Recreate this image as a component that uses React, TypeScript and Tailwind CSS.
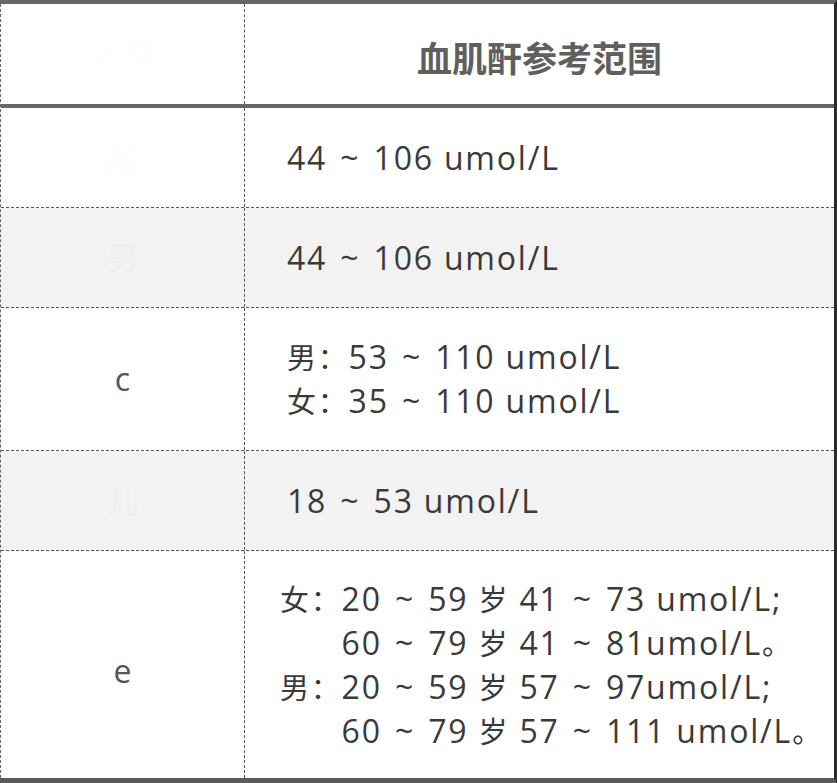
const Tl = () => <span className="mx-[3px]">~</span>;

export default function App() {
  const cjk = "text-[29px]";
  return (
    <div className="w-[837px] h-[783px] bg-white font-['Open_Sans','Noto_Sans_CJK_SC',sans-serif] text-[#3a3a3a]">
      <div className="w-[837px] h-[783px] border-t-4 border-t-[#666666] border-b-[5px] border-b-[#5a5a5a] border-r-[3px] border-r-[#2a2a2a]">
        <div className="h-full border-l border-dashed border-l-[#666666] flex flex-col">
          {/* header */}
          <div className="flex h-[104px] border-b-4 border-b-[#666666]">
            <div className="w-[244px] border-r border-dashed border-[#555555] flex items-center justify-center text-[#fefefe] text-[32px]">
              人群
            </div>
            <div className="flex-1 flex items-center justify-center font-['Noto_Sans_CJK_SC',sans-serif] font-bold text-[35px] text-[#5f5f5f] pt-[6px]">
              血肌酐参考范围
            </div>
          </div>

          {/* row 1 */}
          <div className="flex h-[100px] border-b border-dashed border-[#555555]">
            <div className="w-[244px] border-r border-dashed border-[#555555] flex items-center justify-center text-[32px] text-[#fdfdfd]">
              成
            </div>
            <div className="flex-1 flex items-center pl-[42px] text-[32px] tracking-[1.8px]">
              <span>44 <Tl /> 106 umol/L</span>
            </div>
          </div>

          {/* row 2 */}
          <div className="flex h-[100px] border-b border-dashed border-[#555555] bg-[#f2f2f2]">
            <div className="w-[244px] border-r border-dashed border-[#555555] flex items-center justify-center text-[32px] text-[#efefef]">
              男
            </div>
            <div className="flex-1 flex items-center pl-[42px] text-[32px] tracking-[1.8px]">
              <span>44 <Tl /> 106 umol/L</span>
            </div>
          </div>

          {/* row 3 */}
          <div className="flex h-[143px] border-b border-dashed border-[#555555]">
            <div className="w-[244px] border-r border-dashed border-[#555555] flex items-center justify-center text-[32px] text-[#555555]">
              c
            </div>
            <div className="flex-1 flex flex-col justify-center pl-[42px] text-[32px] leading-[43px] tracking-[1.8px]">
              <div>
                <span className={cjk}>男：</span>53 <Tl /> 110 umol/L
              </div>
              <div>
                <span className={cjk}>女：</span>35 <Tl /> 110 umol/L
              </div>
            </div>
          </div>

          {/* row 4 */}
          <div className="flex h-[100px] border-b border-dashed border-[#555555] bg-[#f2f2f2]">
            <div className="w-[244px] border-r border-dashed border-[#555555] flex items-center justify-center text-[32px] text-[#efefef]">
              儿
            </div>
            <div className="flex-1 flex items-center pl-[42px] text-[32px] tracking-[1.8px]">
              <span>18 <Tl /> 53 umol/L</span>
            </div>
          </div>

          {/* row 5 */}
          <div className="flex flex-1">
            <div className="w-[244px] border-r border-dashed border-[#555555] flex items-center justify-center text-[32px] text-[#555555] pt-[12px]">
              e
            </div>
            <div className="flex-1 flex flex-col justify-center pl-[35px] text-[32px] leading-[43px] tracking-[1.8px] whitespace-nowrap">
              <div>
                <span className={cjk}>女：</span>20 <Tl /> 59 <span className={cjk}>岁</span> 41 <Tl /> 73 umol/L;
              </div>
              <div>
                <span className={`${cjk} invisible`}>女：</span>60 <Tl /> 79 <span className={cjk}>岁</span> 41 <Tl /> 81umol/L<span className={cjk}>。</span>
              </div>
              <div>
                <span className={cjk}>男：</span>20 <Tl /> 59 <span className={cjk}>岁</span> 57 <Tl /> 97umol/L;
              </div>
              <div>
                <span className={`${cjk} invisible`}>男：</span>60 <Tl /> 79 <span className={cjk}>岁</span> 57 <Tl /> 111 umol/L<span className={cjk}>。</span>
              </div>
            </div>
          </div>
        </div>
      </div>
    </div>
  );
}
